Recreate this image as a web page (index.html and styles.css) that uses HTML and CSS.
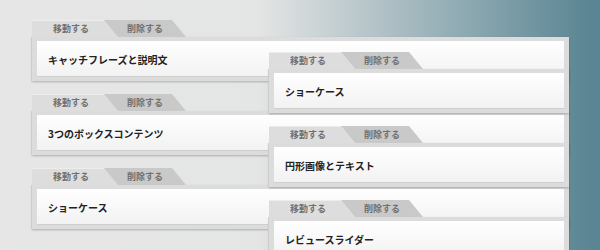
FILE: index.html
```html
<!DOCTYPE html>
<html lang="ja">
<head>
    <meta charset="UTF-8">
    <meta name="viewport" content="width=device-width, initial-scale=1.0">
    <title>モジュール並べ替え</title>
    <link rel="stylesheet" href="styles.css">
</head>
<body>
    <div class="board">
        <!-- Placed modules -->
        <ul class="list list-main">
            <li class="module">
                <div class="module-tabs">
                    <span class="tab tab-move">移動する</span>
                    <span class="tab tab-delete">削除する</span>
                </div>
                <div class="module-body">
                    <div class="module-title">キャッチフレーズと説明文</div>
                </div>
            </li>
            <li class="module">
                <div class="module-tabs">
                    <span class="tab tab-move">移動する</span>
                    <span class="tab tab-delete">削除する</span>
                </div>
                <div class="module-body">
                    <div class="module-title">3つのボックスコンテンツ</div>
                </div>
            </li>
            <li class="module">
                <div class="module-tabs">
                    <span class="tab tab-move">移動する</span>
                    <span class="tab tab-delete">削除する</span>
                </div>
                <div class="module-body">
                    <div class="module-title">ショーケース</div>
                </div>
            </li>
        </ul>

        <!-- Modules being dragged -->
        <ul class="list list-drag">
            <li class="module">
                <div class="module-tabs">
                    <span class="tab tab-move">移動する</span>
                    <span class="tab tab-delete">削除する</span>
                </div>
                <div class="module-body">
                    <div class="module-title">ショーケース</div>
                </div>
            </li>
            <li class="module">
                <div class="module-tabs">
                    <span class="tab tab-move">移動する</span>
                    <span class="tab tab-delete">削除する</span>
                </div>
                <div class="module-body">
                    <div class="module-title">円形画像とテキスト</div>
                </div>
            </li>
            <li class="module">
                <div class="module-tabs">
                    <span class="tab tab-move">移動する</span>
                    <span class="tab tab-delete">削除する</span>
                </div>
                <div class="module-body">
                    <div class="module-title">レビュースライダー</div>
                </div>
            </li>
        </ul>
    </div>
</body>
</html>
```

FILE: styles.css
```css
body {
    margin: 0;
    width: 600px;
    height: 250px;
    overflow: hidden;
    font-family: "Noto Sans CJK JP", "Noto Sans", sans-serif;
    background: linear-gradient(to right, #e6e6e6 0, #e4e5e5 258px, #5a8593 590px);
}

.board {
    display: grid;
}

.list {
    grid-area: 1 / 1;
    list-style: none;
    margin: 0;
    padding: 0;
    display: flex;
    flex-direction: column;
    gap: 13px;
}

.list-main {
    margin: 20px 31px 0 32px;
}

.list-drag {
    margin: 52px 31px 0 269px;
    z-index: 1;
}

.module-tabs {
    display: flex;
    height: 17px;
}

.tab {
    display: flex;
    align-items: center;
    justify-content: center;
    box-sizing: border-box;
    height: 17px;
    font-size: 9px;
    font-weight: bold;
    color: #707070;
}

.tab-move {
    width: 86px;
    padding-right: 8px;
    background: #dddddd;
    box-shadow: inset 0 1px 0 #ededed;
    clip-path: polygon(0 0, 72px 0, 100% 100%, 0 100%);
}

.tab-delete {
    width: 82px;
    margin-left: -14px;
    background: #c9c9c9;
    clip-path: polygon(0 0, 68px 0, 100% 100%, 14px 100%);
}

.module-body {
    background: #dcdcdc;
    padding: 4px 5px 5px;
    box-shadow: -1px 0 0 #cdcdcd, 0 1px 2px rgba(0, 0, 0, 0.25);
}

.module-title {
    display: flex;
    align-items: center;
    height: 35px;
    padding: 1px 0 0 11px;
    box-sizing: border-box;
    font-size: 10px;
    font-weight: bold;
    color: #222;
    background: linear-gradient(#ffffff, #f2f2f2);
    box-shadow: 0 1px 0 #cfcfcf;
}
```
